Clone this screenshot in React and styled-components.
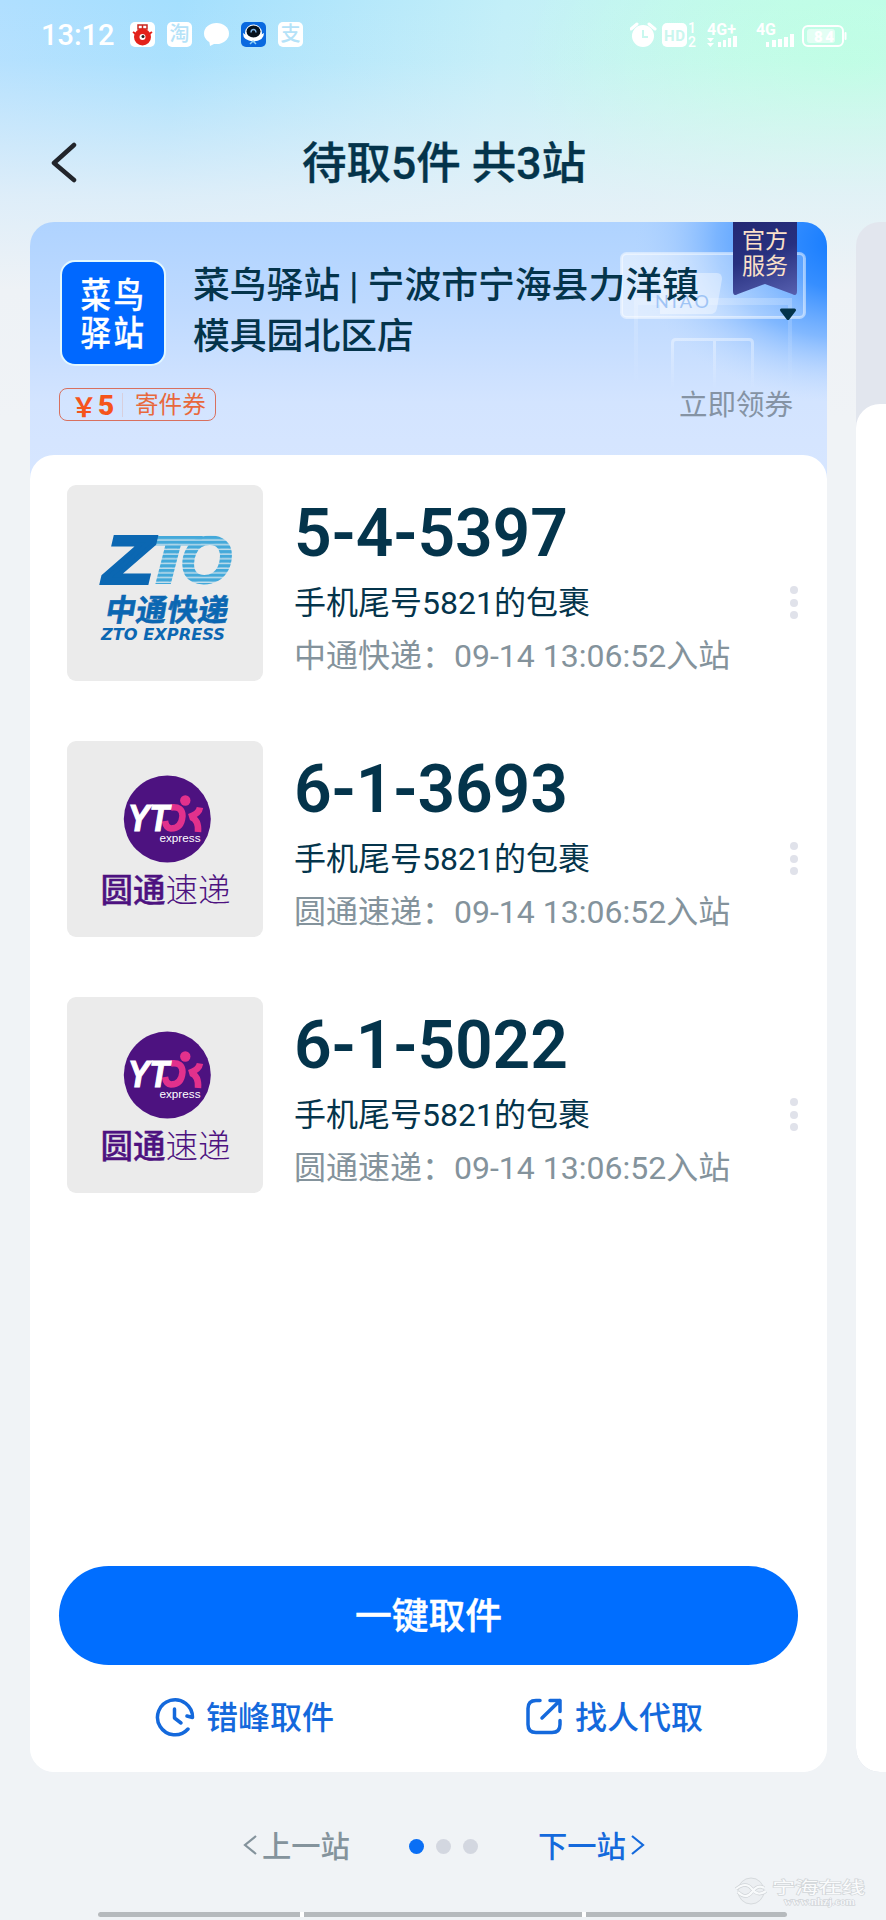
import React from 'react';
import styled, { createGlobalStyle } from 'styled-components';

const GlobalStyle = createGlobalStyle`
  * {
    box-sizing: border-box;
  }

  body {
    margin: 0;
    background: #f0f3f6;
    font-family: Roboto, 'Noto Sans CJK SC', sans-serif;
    color: #04344b;
  }

  svg {
    display: block;
    flex-shrink: 0;
  }
`;

const Page = styled.div`
  position: relative;
  display: flex;
  flex-direction: column;
  width: 886px;
  height: 1920px;
  overflow: hidden;
  background:
    linear-gradient(180deg, rgba(230, 240, 248, 0) 0%, rgba(230, 240, 248, 0.1) 60px, rgba(230, 240, 248, 0.85) 195px, #eef2f6 290px, #f0f3f6 420px),
    radial-gradient(ellipse 330px 210px at 850px 65px, #bcffe3 0%, rgba(188, 255, 227, 0) 100%),
    linear-gradient(95deg, #b0dfff 0%, #a4dffe 17%, #c3eff8 48%, #c9f9ef 75%, #c8fbee 100%);
`;

const StatusBar = styled.div`
  display: flex;
  align-items: center;
  justify-content: space-between;
  height: 69px;
  padding: 0 39px 0 41px;
  color: #fff;
`;

const StatusGroup = styled.div`
  display: flex;
  align-items: center;
  gap: ${props => props.gap || 0}px;
`;

const Clock = styled.span`
  width: 77px;
  font-size: 29px;
  font-weight: 500;
  line-height: 34px;
`;

const AppBadge = styled.span`
  display: flex;
  align-items: center;
  justify-content: center;
  width: 25px;
  height: 25px;
  border-radius: 5px;
  overflow: hidden;
  background: ${props => props.bg || '#fff'};
  color: #b5e2f8;
  font-size: 20px;
  font-weight: 500;
  line-height: 25px;
`;

const TitleBar = styled.header`
  display: grid;
  grid-template-columns: 90px 1fr 90px;
  align-items: center;
  height: 153px;
  padding: 35px 0 0;
`;

const BackButton = styled.button`
  padding: 0 0 0 50px;
  border: 0;
  background: none;
`;

const Title = styled.h1`
  margin: 0;
  padding: 1px 0 0 2px;
  font-size: 44.5px;
  font-weight: 500;
  line-height: 56px;
  text-align: center;
  -webkit-text-stroke: 0.35px currentColor;
`;

const Stations = styled.main`
  display: flex;
  gap: 29px;
  height: 1550px;
  padding-left: 30px;
`;

const StationCard = styled.section`
  position: relative;
  display: flex;
  flex-direction: column;
  flex-shrink: 0;
  width: 797px;
  border-radius: 24px;
  overflow: hidden;
  background: linear-gradient(180deg, #afd3ff 0, #bfdaff 90px, #d3e4ff 180px, #d7e6ff 260px, #fff 300px);
`;

const NextCard = styled(StationCard)`
  padding-top: 182px;
  background: #e2e6ee;
`;

const Storefront = styled.svg`
  position: absolute;
  top: 0;
  right: 0;
`;

const Ribbon = styled.div`
  position: absolute;
  top: 0;
  right: 30px;
  width: 64px;
  height: 73px;
  padding-top: 6px;
  clip-path: path('M0 0H64V69Q64 75 59 72L32 62L5 72Q0 75 0 69Z');
  background: linear-gradient(160deg, #232873 0%, #27307f 45%, #5760b0 100%);
  color: #fbe0c8;
  font-size: 23px;
  line-height: 25.5px;
  text-align: center;
`;

const Arrow = styled.svg`
  position: absolute;
  top: 86px;
  right: 30px;
`;

const StationHead = styled.div`
  position: relative;
  display: flex;
  gap: 27px;
  height: 166px;
  padding: 38px 30px 0 30px;
`;

const StationLogo = styled.div`
  width: 106px;
  height: 106px;
  border: 2px solid #e3f8ff;
  border-radius: 15px;
  background: #0068ff;
`;

const StationName = styled.h2`
  margin: 0;
  width: 520px;
  font-size: 36.8px;
  font-weight: 500;
  line-height: 51px;
`;

const CouponRow = styled.div`
  position: relative;
  display: flex;
  align-items: center;
  justify-content: space-between;
  height: 33px;
  padding: 0 34px 0 29px;
`;

const Coupon = styled.div`
  display: flex;
  align-items: center;
  width: 157px;
  height: 33px;
  border: 1px solid #d8705e;
  border-radius: 8px;
  color: #e8683c;
  font-size: 23.6px;
  line-height: 30px;
`;

const CouponValue = styled.span`
  display: flex;
  align-items: center;
  gap: 3px;
  width: 63px;
  height: 24px;
  padding: 3px 0 0 11px;
  border-right: 1px solid #d8cfdc;
  margin-right: 12px;
  color: #f5541b;
  font-family: 'Noto Sans CJK SC', sans-serif;
  font-size: 26px;
  font-weight: 700;
  line-height: 24px;

  b {
    margin-left: -2px;
    font-family: Roboto, sans-serif;
    font-size: 28px;
  }
`;

const ClaimLink = styled.span`
  padding-top: 2px;
  color: #8593a4;
  font-size: 28.5px;
  line-height: 33px;
`;

const StationBody = styled.div`
  display: flex;
  flex: 1;
  flex-direction: column;
  margin-top: ${props => props.offset || 0}px;
  padding: 30px 29px 0;
  border-radius: 24px;
  background: #fff;
`;

const ParcelList = styled.div`
  display: flex;
  flex: 1;
  flex-direction: column;
  gap: 60px;
  padding-left: 8px;
`;

const Parcel = styled.article`
  display: flex;
  height: 196px;
`;

const Thumb = styled.div`
  width: 196px;
  height: 196px;
  border-radius: 9px;
  background: #ebebeb;
  overflow: hidden;
`;

const ParcelInfo = styled.div`
  flex: 1;
  padding: 11px 0 0 31px;
`;

const PickupCode = styled.div`
  height: 83px;
  font-size: 66px;
  font-weight: 600;
  letter-spacing: -0.1px;
  line-height: 76px;
`;

const ParcelLine = styled.div`
  height: 53px;
  color: ${props => (props.muted ? '#84939c' : '#04344b')};
  font-size: 32px;
  line-height: 49px;
  white-space: nowrap;
`;

const MoreButton = styled.div`
  display: flex;
  flex-direction: column;
  gap: 4.5px;
  padding: 101px 0 0;

  i {
    width: 8px;
    height: 8px;
    border-radius: 50%;
    background: #e0e2ea;
  }
`;

const PickupButton = styled.button`
  height: 99px;
  padding: 0 0 6px;
  border: 0;
  border-radius: 50px;
  background: #006eff;
  color: #fff;
  font-family: inherit;
  font-size: 36.8px;
  font-weight: 500;
  -webkit-text-stroke: 0.4px currentColor;
`;

const Actions = styled.div`
  display: grid;
  grid-template-columns: 1fr 1fr;
  height: 107px;
  padding: 0 0 4px 1px;
`;

const Action = styled.div`
  display: flex;
  align-items: center;
  justify-content: center;
  gap: 11px;
  color: #1469dc;
  font-size: 32px;
  font-weight: 500;

  span {
    padding-bottom: 4px;
  }
`;

const Pager = styled.nav`
  display: flex;
  align-items: center;
  height: 148px;
  padding: 0 0 2px 243px;
`;

const PagerLink = styled.span`
  display: flex;
  align-items: center;
  gap: 5px;
  color: ${props => (props.active ? '#1469dc' : '#84939c')};
  font-size: 29.3px;
  font-weight: 500;

  span {
    padding-bottom: 3px;
  }
`;

const Dots = styled.div`
  display: flex;
  gap: 12px;
  margin: 2px 60px 0 59px;
`;

const Dot = styled.i`
  width: 15px;
  height: 15px;
  border-radius: 50%;
  background: ${props => (props.active ? '#0a6ff5' : '#d3d7e0')};
`;

const Watermark = styled.div`
  position: absolute;
  right: 15px;
  bottom: 9px;
`;

const HomeBars = styled.div`
  position: absolute;
  bottom: 3px;
  left: 98px;
  display: grid;
  grid-template-columns: 202px 278px 201px;
  gap: 4px;
  width: 689px;
  height: 5px;
  border-radius: 3px;
  background: #fff;
  overflow: hidden;

  i {
    background: #b6babd;
  }
`;

const StatusIcons = () => (
  <svg width="217" height="28" viewBox="0 0 217 28" fill="#fff" fontFamily="Roboto, sans-serif">
    <circle cx="13" cy="15" r="11" />
    <path d="M1 8l6-5M25 8l-6-5" stroke="#fff" strokeWidth="3" strokeLinecap="round" />
    <path d="M13 9v7h5" stroke="#c9f8ef" strokeWidth="2" fill="none" />
    <rect x="32" y="2" width="25" height="24" rx="5" />
    <text x="34" y="20" fontSize="15" fontWeight="700" fill="#c9f6ee" textLength="21">HD</text>
    <text x="58" y="12" fontSize="14" fontWeight="500">1</text>
    <text x="58" y="26" fontSize="14" fontWeight="500">2</text>
    <text x="77" y="14" fontSize="16" fontWeight="700" textLength="29">4G+</text>
    <path d="M77 17h7l-3.500 4zM77 22h7l-3.500 4z" />
    <path d="M88 21h3v5h-3zM93 19h3v7h-3zM98 17h3v9h-3zM103 15h4v11h-4z" />
    <text x="126" y="14" fontSize="16" fontWeight="700" textLength="20">4G</text>
    <path d="M136 21h3v5h-3zM142 19h4v7h-4zM148 18h4v8h-4zM154 16h4v10h-4zM160 13h4v13h-4z" />
    <rect x="173" y="5" width="40" height="20" rx="5" fill="none" stroke="#fff" strokeWidth="2" />
    <rect x="177" y="8" width="28" height="14" rx="3" opacity=".55" />
    <rect x="214.500" y="11" width="2" height="8" rx="1" />
    <text x="184" y="20.500" fontSize="15" fontWeight="900" textLength="20">84</text>
  </svg>
);

const StationMark = () => (
  <svg width="102" height="102" viewBox="0 0 102 102" fill="#fff" fontFamily="'Noto Sans CJK SC', sans-serif" fontWeight="500" stroke="#fff" strokeWidth=".3">
    <g transform="translate(18.500 0) scale(.87 1)" fontSize="35">
      <text x="0" y="46">菜</text>
      <text x="38" y="46">鸟</text>
      <text x="0" y="84">驿</text>
      <text x="38" y="84">站</text>
    </g>
  </svg>
);

const StorefrontArt = () => (
  <Storefront width="320" height="233" viewBox="507 222 320 233">
    <defs>
      <radialGradient id="glow" gradientUnits="userSpaceOnUse" cx="0" cy="0" r="1" gradientTransform="translate(845 242) scale(215 160)">
        <stop offset="0" stopColor="#1079ff" />
        <stop offset=".3" stopColor="#2b88ff" stopOpacity=".92" />
        <stop offset=".6" stopColor="#5fa5ff" stopOpacity=".66" />
        <stop offset=".8" stopColor="#8dbeff" stopOpacity=".32" />
        <stop offset="1" stopColor="#b5d6ff" stopOpacity="0" />
      </radialGradient>
      <linearGradient id="fade" x1="0" y1="0" x2="0" y2="1">
        <stop offset="0" stopColor="#fff" stopOpacity=".4" />
        <stop offset="1" stopColor="#fff" stopOpacity="0" />
      </linearGradient>
      <linearGradient id="board" x1="0" y1="0" x2="1" y2="0">
        <stop offset="0" stopColor="#fff" stopOpacity=".5" />
        <stop offset="1" stopColor="#fff" stopOpacity=".22" />
      </linearGradient>
    </defs>
    <rect x="507" y="222" width="320" height="233" fill="url(#glow)" />
    <path d="M634 298h158v88h-4v-81H638v81h-4z" fill="url(#fade)" opacity=".55" />
    <path d="M671 343q0-5 5-5h73q5 0 5 5v46h-3v-46q0-2-2-2h-33v48h-3v-48h-37q-2 0-2 2v46h-3z" fill="url(#fade)" />
    <rect x="621.500" y="253.500" width="183" height="64" rx="5" fill="url(#board)" stroke="#fff" strokeOpacity=".48" strokeWidth="3" />
    <path d="M660 273h57q5 0 5 6l-5 29q-1 6-7 6h-50z" fill="#fff" opacity=".4" />
    <text x="655" y="308" fontFamily="Lato, sans-serif" fontSize="18" fill="#9fc4f5" textLength="54">NIAO</text>
  </Storefront>
);

const ZtoLogo = () => (
  <svg width="196" height="196" viewBox="0 0 196 196" fill="#0b67b2">
    <defs>
      <pattern id="stripes" width="8" height="4.700" patternUnits="userSpaceOnUse" y="51">
        <rect width="8" height="3.500" fill="#44a9da" />
        <rect y="3.500" width="8" height="1.200" fill="#c5dfec" />
      </pattern>
    </defs>
    <g fontFamily="'Liberation Sans', sans-serif" fontWeight="700" fontStyle="italic" fontSize="67">
      <text x="74" y="97.500" fill="url(#stripes)" stroke="url(#stripes)" strokeWidth="2" textLength="54" lengthAdjust="spacingAndGlyphs">T</text>
      <text x="113" y="97.500" fill="url(#stripes)" stroke="url(#stripes)" strokeWidth="2" textLength="52" lengthAdjust="spacingAndGlyphs">O</text>
      <text x="37" y="97.500" stroke="#0b67b2" strokeWidth="4" textLength="49" lengthAdjust="spacingAndGlyphs">Z</text>
    </g>
    <text transform="translate(37 136) skewX(-10)" fontFamily="'Noto Sans CJK SC', sans-serif" fontWeight="700" fontSize="30.500" stroke="#0b67b2" strokeWidth=".6" textLength="123">中通快递</text>
    <text x="34" y="154.500" fontFamily="'DejaVu Sans', sans-serif" fontWeight="700" fontStyle="italic" fontSize="16" textLength="124" lengthAdjust="spacingAndGlyphs">ZTO EXPRESS</text>
  </svg>
);

const YtoLogo = () => (
  <svg width="196" height="196" viewBox="0 0 196 196">
    <circle cx="100.300" cy="78" r="43.500" fill="#4d1280" />
    <g fill="none" stroke="#e2318c" strokeWidth="6.500">
      <path d="M104 66.500Q115.500 65 115.500 75Q114.500 87.500 104 87.500Q99 87 98 80" />
      <path d="M133 66.500Q132 73 122 76M124 76Q132 79 131 91" />
    </g>
    <circle cx="118.300" cy="59.500" r="5.200" fill="#e2318c" />
    <text x="61" y="90" fill="#fff" fontFamily="'Liberation Sans', sans-serif" fontWeight="700" fontStyle="italic" fontSize="37" stroke="#fff" strokeWidth="1.200" textLength="41" lengthAdjust="spacingAndGlyphs">YT</text>
    <text x="92.500" y="101" fill="#fff" fontFamily="'Liberation Sans', sans-serif" fontSize="11.500" textLength="41" lengthAdjust="spacingAndGlyphs">express</text>
    <g fill="#4d1280" fontFamily="'Noto Sans CJK SC', sans-serif" fontSize="32.500">
      <text x="33.500" y="160.500" fontWeight="500" stroke="#4d1280" strokeWidth=".4">圆通</text>
      <text x="98.500" y="160.500" fontWeight="300">速递</text>
    </g>
  </svg>
);

const parcels = [
  { code: '5-4-5397', carrier: '中通快递', Logo: ZtoLogo },
  { code: '6-1-3693', carrier: '圆通速递', Logo: YtoLogo },
  { code: '6-1-5022', carrier: '圆通速递', Logo: YtoLogo },
];

const App = () => {
  return (
    <>
      <GlobalStyle />
      <Page>
        <StatusBar>
          <StatusGroup gap={12}>
            <Clock>13:12</Clock>
            <AppBadge>
              <svg width="25" height="25" viewBox="0 0 25 25">
                <path d="M8 3h9v4H8zM12.500 3v6" fill="none" stroke="#c9271f" strokeWidth="1.500" />
                <circle cx="12.500" cy="15" r="8.500" fill="#e3221b" />
                <path d="M3 10l3 2M22 10l-3 2" stroke="#e3221b" strokeWidth="2" />
                <circle cx="12.500" cy="15" r="3" fill="#fff" />
                <circle cx="13" cy="14.500" r="1.500" fill="#222" />
              </svg>
            </AppBadge>
            <AppBadge>淘</AppBadge>
            <svg width="25" height="25" viewBox="0 0 25 25" fill="#fff">
              <ellipse cx="12.500" cy="11.500" rx="12.500" ry="10.500" />
              <path d="M5 17l1 7 8-4z" />
            </svg>
            <AppBadge bg="#0a69df">
              <svg width="25" height="25" viewBox="0 0 25 25">
                <circle cx="12.500" cy="11" r="8.500" fill="#fff" />
                <path d="M2 11q10 8 21 0q0 8-10.500 8T2 11" fill="#fff" />
                <ellipse cx="12.500" cy="9.500" rx="7" ry="6" fill="#06111c" />
                <path d="M10 10.500q0-3 2.500-3t2.500 3" fill="none" stroke="#7fb6e8" strokeWidth="1.300" />
                <path d="M9 22l3-3 3 3" fill="none" stroke="#8fd0f5" strokeWidth="1.500" />
              </svg>
            </AppBadge>
            <AppBadge>支</AppBadge>
          </StatusGroup>
          <StatusIcons />
        </StatusBar>

        <TitleBar>
          <BackButton>
            <svg width="29" height="42" viewBox="0 0 29 42" fill="none" stroke="#22252b" strokeWidth="4.500" strokeLinecap="round" strokeLinejoin="round">
              <path d="M24 3L4 21L24 38" />
            </svg>
          </BackButton>
          <Title>待取5件 共3站</Title>
        </TitleBar>

        <Stations>
          <StationCard>
            <StorefrontArt />
            <StationHead>
              <StationLogo>
                <StationMark />
              </StationLogo>
              <StationName>菜鸟驿站 | 宁波市宁海县力洋镇模具园北区店</StationName>
            </StationHead>
            <Ribbon>官方<br />服务</Ribbon>
            <Arrow width="18" height="13" viewBox="0 0 18 13">
              <path d="M2.500 2h13L9 10.500z" fill="#04344b" stroke="#04344b" strokeWidth="3" strokeLinejoin="round" />
            </Arrow>
            <CouponRow>
              <Coupon>
                <CouponValue>￥<b>5</b></CouponValue>
                寄件券
              </Coupon>
              <ClaimLink>立即领券</ClaimLink>
            </CouponRow>
            <StationBody offset={34}>
              <ParcelList>
                {parcels.map(({ code, carrier, Logo }) => (
                  <Parcel key={code}>
                    <Thumb>
                      <Logo />
                    </Thumb>
                    <ParcelInfo>
                      <PickupCode>{code}</PickupCode>
                      <ParcelLine>手机尾号5821的包裹</ParcelLine>
                      <ParcelLine muted>{carrier}：09-14 13:06:52入站</ParcelLine>
                    </ParcelInfo>
                    <MoreButton>
                      <i />
                      <i />
                      <i />
                    </MoreButton>
                  </Parcel>
                ))}
              </ParcelList>
              <PickupButton>一键取件</PickupButton>
              <Actions>
                <Action>
                  <svg width="40" height="40" viewBox="0 0 40 40" fill="none" stroke="#1469dc" strokeWidth="3.500" strokeLinecap="round" strokeLinejoin="round">
                    <path d="M33 32A17.500 17.500 0 1 1 37.500 20.500L32 19" />
                    <path d="M19.500 12v9l6.500 5" />
                  </svg>
                  <span>错峰取件</span>
                </Action>
                <Action>
                  <svg width="40" height="40" viewBox="0 0 40 40" fill="none" stroke="#1469dc" strokeWidth="3.500" strokeLinecap="round" strokeLinejoin="round">
                    <path d="M16 3.500h-4q-8 0-8 8v16q0 8 8 8h16q8 0 8-8v-4" />
                    <path d="M26 3.500h10v11M36 3.500L18 21" />
                  </svg>
                  <span>找人代取</span>
                </Action>
              </Actions>
            </StationBody>
          </StationCard>
          <NextCard>
            <StationBody />
          </NextCard>
        </Stations>

        <Pager>
          <PagerLink>
            <svg width="14" height="22" viewBox="0 0 14 22" fill="none" stroke="#84939c" strokeWidth="2.200">
              <path d="M13 2L2 11l11 9" />
            </svg>
            <span>上一站</span>
          </PagerLink>
          <Dots>
            <Dot active />
            <Dot />
            <Dot />
          </Dots>
          <PagerLink active>
            <span>下一站</span>
            <svg width="14" height="22" viewBox="0 0 14 22" fill="none" stroke="#1469dc" strokeWidth="2.200">
              <path d="M1 2l11 9-11 9" />
            </svg>
          </PagerLink>
        </Pager>

        <Watermark>
          <svg width="136" height="42" viewBox="0 -7 136 42">
            <circle cx="16" cy="15" r="13" fill="#eceff2" stroke="#d6dadd" />
            <path d="M1 13q10-8 16 0t14 2M3 16q8 8 14 0t12-4" fill="none" stroke="#cfd3d7" strokeWidth="3.500" />
            <path d="M1 13q10-8 16 0t14 2M3 16q8 8 14 0t12-4" fill="none" stroke="#f8fafb" strokeWidth="2.200" />
            <text x="37" y="17" fontFamily="'Noto Sans CJK SC', sans-serif" fontSize="16" fill="#fafbfc" stroke="#d2d6d9" strokeWidth="1.300" paintOrder="stroke" textLength="93" lengthAdjust="spacingAndGlyphs">宁海在线</text>
            <text x="49" y="29" fontFamily="'Liberation Serif', serif" fontWeight="700" fontSize="11" fill="#f4f6f8" stroke="#c8ccd0" strokeWidth="1" paintOrder="stroke" textLength="71" lengthAdjust="spacingAndGlyphs">www.nhzj.com</text>
          </svg>
        </Watermark>
        <HomeBars>
          <i />
          <i />
          <i />
        </HomeBars>
      </Page>
    </>
  );
};

export default App;
